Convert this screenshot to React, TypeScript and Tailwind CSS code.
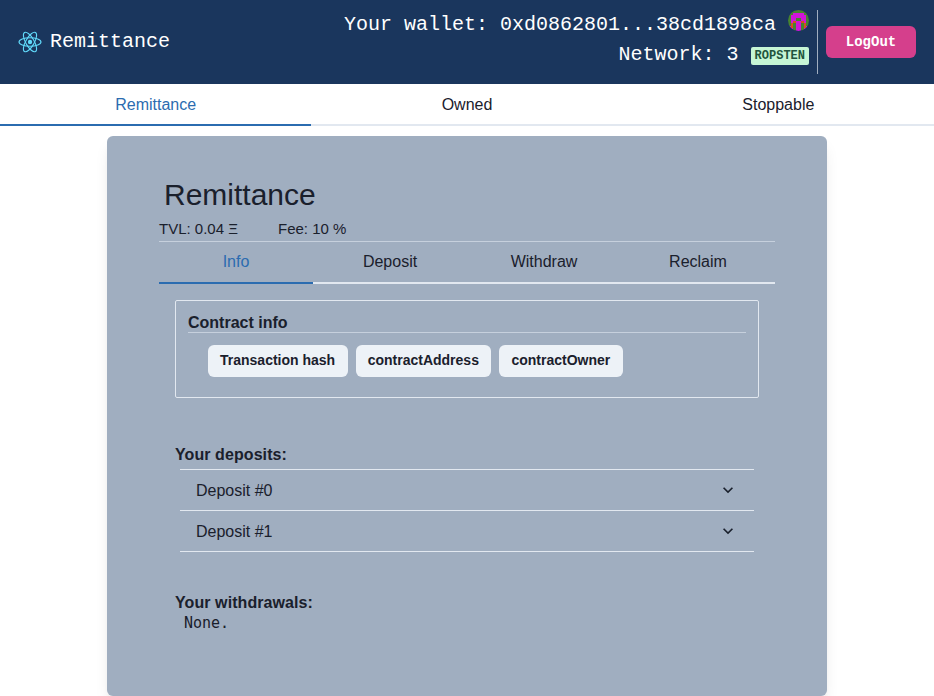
import React from "react";

const HEADER_FONT = "font-['Liberation_Mono',monospace]";

function ReactLogo() {
  return (
    <svg className="h-6 w-6" viewBox="-12 -12 24 24" fill="none" stroke="#61dafb" strokeWidth="1.1">
      <circle r="2.2" fill="#61dafb" stroke="none" />
      <ellipse rx="11" ry="4.2" />
      <ellipse rx="11" ry="4.2" transform="rotate(60)" />
      <ellipse rx="11" ry="4.2" transform="rotate(120)" />
    </svg>
  );
}

const BLOCKIE = [
  "gggggggg",
  "ggmmmmgg",
  "gmmmmmmg",
  "gmmggmmg",
  "gmommomg",
  "gogmmgog",
  "mogmmgom",
  "mmgmmgmm",
];
const BLOCKIE_COLORS: Record<string, string> = { g: "#47832f", m: "#d015d8", o: "#d4501f" };

function Blockie() {
  return (
    <svg className="h-[21px] w-[21px] rounded-full" viewBox="0 0 8 8" shapeRendering="crispEdges">
      {BLOCKIE.flatMap((row, y) =>
        row.split("").map((c, x) => (
          <rect key={`${x}-${y}`} x={x} y={y} width="1" height="1" fill={BLOCKIE_COLORS[c]} />
        )),
      )}
    </svg>
  );
}

function Chevron() {
  return (
    <svg className="h-5 w-5" viewBox="0 0 24 24" fill="currentColor">
      <path d="M16.59 8.59L12 13.17 7.41 8.59 6 10l6 6 6-6z" />
    </svg>
  );
}

function Tabs({ items, className = "" }: { items: string[]; className?: string }) {
  return (
    <div className="flex">
      {items.map((item, i) => (
        <button
          key={item}
          className={`h-[42px] flex-1 border-b-2 text-base leading-6 ${className} ${
            i === 0 ? "border-[#2b6cb0] text-[#2b6cb0]" : "border-[#e2e8f0]"
          }`}
        >
          {item}
        </button>
      ))}
    </div>
  );
}

function Header() {
  return (
    <header className={`flex h-[84px] items-center justify-between bg-[#1a365d] px-[18px] text-xl text-white ${HEADER_FONT}`}>
      <div className="flex items-center gap-2">
        <ReactLogo />
        <span>Remittance</span>
      </div>
      <div className="flex h-16 items-center">
        <div className="flex h-16 flex-col items-end pr-2">
          <div className="flex h-[30px] gap-3">
            <span className="leading-[30px]">Your wallet: 0xd0862801...38cd1898ca</span>
            <Blockie />
          </div>
          <div className="flex h-[30px] items-center gap-3">
            <span className="leading-[30px]">Network: 3</span>
            <span className="mt-0.5 h-[18px] rounded-xs bg-[#c6f6d5] px-1 text-xs leading-[18px] font-bold text-[#22543d]">
              ROPSTEN
            </span>
          </div>
        </div>
        <div className="mr-2 h-16 w-px bg-[#a0aec0]" />
        <button className="h-8 w-[90px] rounded-md bg-[#d53f8c] text-sm font-bold">LogOut</button>
      </div>
    </header>
  );
}

function ContractInfo() {
  return (
    <section className="h-[98px] rounded-xs border border-[#e2e8f0] px-3 pt-[9px]">
      <h3 className="h-[23px] border-b border-[#c6d0dd] leading-[26px] font-bold">Contract info</h3>
      <div className="mt-3 flex gap-2 pl-5">
        {["Transaction hash", "contractAddress", "contractOwner"].map((label) => (
          <button key={label} className="h-8 rounded-md bg-[#edf2f7] pr-[12.5px] pb-0.5 pl-3 text-sm font-bold">
            {label}
          </button>
        ))}
      </div>
    </section>
  );
}

export default function App() {
  return (
    <div className="h-[696px] overflow-hidden bg-white font-['Liberation_Sans',sans-serif] text-[#1a202c]">
      <Header />
      <Tabs items={["Remittance", "Owned", "Stoppable"]} className="pt-0.5" />
      <main className="mx-auto mt-2.5 h-[560px] w-[720px] rounded-md bg-[#a0aec0] px-[52px] pt-9 shadow-lg">
        <h1 className="pl-[5px] text-[30px] leading-[45px]">Remittance</h1>
        <div className="flex h-[25px] gap-10 border-b border-[#c6d0dd] text-[15px] leading-[23px]">
          <span>TVL: 0.04 Ξ</span>
          <span>Fee: 10 %</span>
        </div>
        <Tabs items={["Info", "Deposit", "Withdraw", "Reclaim"]} />
        <div className="px-4 pt-4">
          <ContractInfo />
          <h3 className="mt-[45px] leading-6 font-bold tracking-[0.08px]">Your deposits:</h3>
          <div className="mt-0.5 mr-[5px] ml-[5px] border-b border-[#e2e8f0]">
            {["Deposit #0", "Deposit #1"].map((name) => (
              <div key={name} className="flex h-[41px] items-center justify-between border-t border-[#e2e8f0] px-4">
                <span className="pt-0.5">{name}</span>
                <Chevron />
              </div>
            ))}
          </div>
          <h3 className="mt-[39px] leading-6 font-bold tracking-[0.08px]">Your withdrawals:</h3>
          <p className="pl-[9px] font-['DejaVu_Sans_Mono',monospace] text-[15px] leading-4">None.</p>
        </div>
      </main>
    </div>
  );
}
